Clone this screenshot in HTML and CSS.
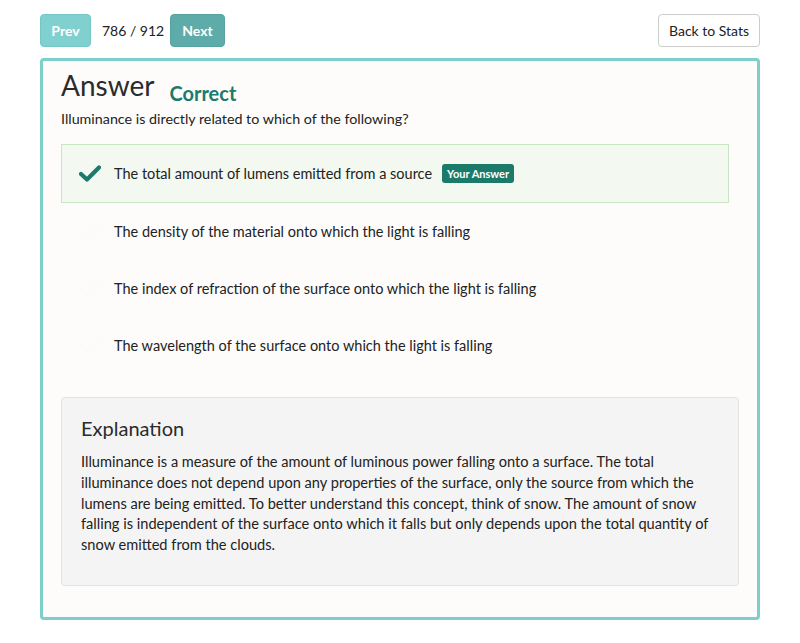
FILE: index.html
```html
<!DOCTYPE html>
<html>
<head>
<meta charset="utf-8">
<link rel="stylesheet" href="styles.css">
</head>
<body>
<div class="page">
  <div class="toolbar">
    <div class="nav">
      <button class="btn btn-prev">Prev</button>
      <span class="counter">786 / 912</span>
      <button class="btn btn-next">Next</button>
    </div>
    <button class="btn-back">Back to Stats</button>
  </div>
  <div class="card">
    <div class="title-row">
      <h1 class="title">Answer</h1>
      <span class="status">Correct</span>
    </div>
    <p class="question">Illuminance is directly related to which of the following?</p>
    <ul class="options">
      <li class="option selected">
        <svg class="check" viewBox="0 0 22 16"><path d="M2 8.5 L8 14 L20 2" fill="none" stroke="currentColor" stroke-width="4.2" stroke-linecap="round" stroke-linejoin="round"/></svg>
        <span class="opt-text">The total amount of lumens emitted from a source</span>
        <span class="badge">Your Answer</span>
      </li>
      <li class="option">
        <svg class="check faint" viewBox="0 0 22 16"><path d="M2 8.5 L8 14 L20 2" fill="none" stroke="currentColor" stroke-width="4.2" stroke-linecap="round" stroke-linejoin="round"/></svg>
        <span class="opt-text">The density of the material onto which the light is falling</span>
      </li>
      <li class="option">
        <svg class="check faint" viewBox="0 0 22 16"><path d="M2 8.5 L8 14 L20 2" fill="none" stroke="currentColor" stroke-width="4.2" stroke-linecap="round" stroke-linejoin="round"/></svg>
        <span class="opt-text">The index of refraction of the surface onto which the light is falling</span>
      </li>
      <li class="option">
        <svg class="check faint" viewBox="0 0 22 16"><path d="M2 8.5 L8 14 L20 2" fill="none" stroke="currentColor" stroke-width="4.2" stroke-linecap="round" stroke-linejoin="round"/></svg>
        <span class="opt-text">The wavelength of the surface onto which the light is falling</span>
      </li>
    </ul>
    <div class="explanation">
      <h2 class="exp-title">Explanation</h2>
      <p class="exp-text">Illuminance is a measure of the amount of luminous power falling onto a surface. The total illuminance does not depend upon any properties of the surface, only the source from which the lumens are being emitted. To better understand this concept, think of snow. The amount of snow falling is independent of the surface onto which it falls but only depends upon the total quantity of snow emitted from the clouds.</p>
    </div>
  </div>
</div>
</body>
</html>
```

FILE: styles.css
```css
* { box-sizing: border-box; }
html, body { margin: 0; padding: 0; background: #ffffff; }
body {
  font-family: "Lato", "Open Sans", sans-serif;
  color: #222;
  font-size: 14px;
}
.page {
  width: 720px;
  margin-left: 40px;
  padding-top: 14px;
}
.toolbar {
  display: flex;
  justify-content: space-between;
  align-items: center;
  height: 33px;
}
.nav {
  display: flex;
  align-items: center;
}
.btn {
  height: 33px;
  border: 1px solid transparent;
  border-radius: 4px;
  color: #fff;
  font-family: inherit;
  font-weight: 700;
  font-size: 14px;
  padding: 0;
}
.btn-prev {
  width: 51px;
  background: #80d0d0;
  border-color: #76c6c6;
}
.btn-next {
  width: 55px;
  background: #5eaca9;
  border-color: #57a3a0;
}
.counter {
  font-size: 14px;
  color: #222;
  margin: 0 10px 0 11px;
  white-space: nowrap;
  width: 58px;
  text-align: center;
}
.btn-back {
  height: 33px;
  width: 102px;
  background: #fff;
  border: 1px solid #cccccc;
  border-radius: 4px;
  font-family: inherit;
  font-size: 14px;
  color: #222;
  padding: 0;
}
.card {
  margin-top: 11px;
  border: 3px solid #7dcfcb;
  border-radius: 4px;
  background: #fdfcfb;
  padding: 5px 18px 32px 18px;
  height: 562px;
}
.title-row {
  display: flex;
  align-items: baseline;
}
.title {
  margin: 0;
  font-size: 28px;
  font-weight: 400;
  color: #2b2b2b;
  line-height: 38px;
}
.status {
  margin-left: 15px;
  font-size: 20px;
  font-weight: 700;
  color: #1b7a6a;
  position: relative;
  top: 5px;
}
.question {
  margin: 5px 0 15px;
  line-height: 20px;
  font-size: 14.3px;
}
.options {
  list-style: none;
  margin: 0 10px 0 0;
  padding: 0;
}
.option {
  display: flex;
  align-items: center;
  height: 57px;
  padding-left: 17px;
  border: 1px solid transparent;
}
.option.selected {
  background: #f3f9f1;
  border-color: #c9e5c4;
  height: 59px;
}
.check {
  width: 22px;
  height: 17px;
  color: #1b7a6a;
  margin-right: 13px;
  flex: none;
}
.check.faint { color: #fbfbfa; }
.opt-text { color: #222; font-size: 14.5px; }
.badge {
  margin-left: 10px;
  background: #1b7a6a;
  color: #fff;
  font-weight: 700;
  font-size: 11px;
  padding: 3px 5px;
  border-radius: 3px;
  line-height: 13px;
}
.explanation {
  margin-top: 23px;
  background: #f4f4f4;
  border: 1px solid #e2e2e2;
  border-radius: 4px;
  padding: 16px 28px 28px 19px;
  height: 189px;
}
.exp-title {
  margin: 0 0 10px;
  font-size: 20px;
  font-weight: 400;
  color: #2b2b2b;
  line-height: 28px;
}
.exp-text {
  margin: 0;
  line-height: 20.8px;
  font-size: 14.6px;
  color: #222;
}
```
